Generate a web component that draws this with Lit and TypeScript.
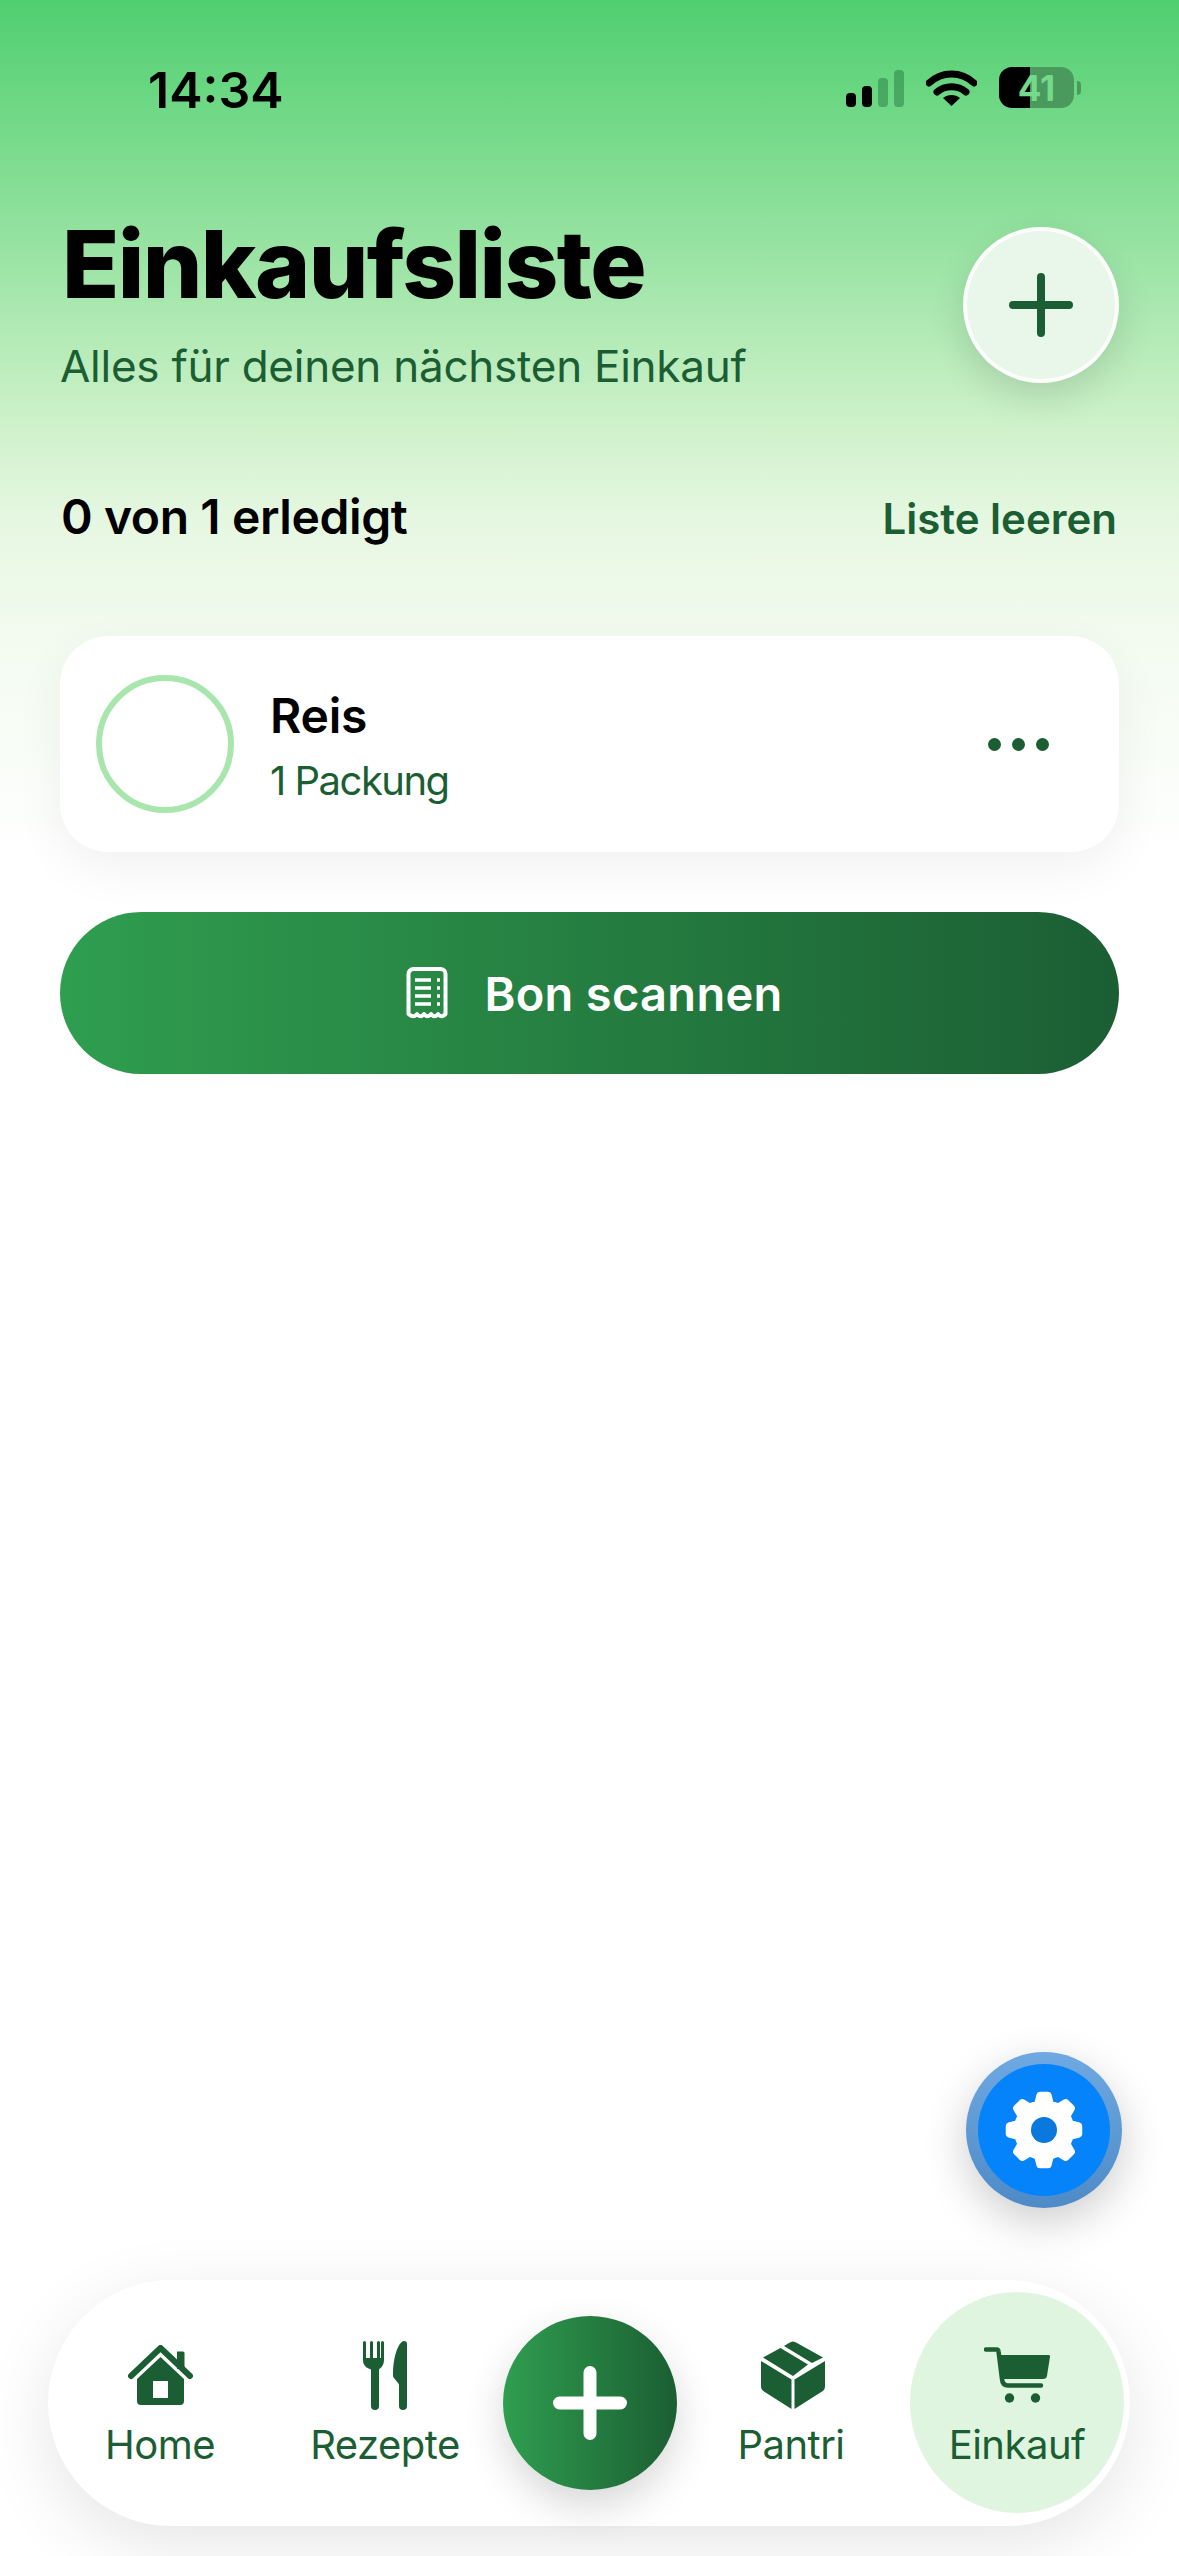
import { LitElement, html, css, svg } from 'lit';
import { customElement } from 'lit/decorators.js';

// 8 teeth gear, outline computed so the teeth stay even
function gearPath(cx: number, cy: number, outer: number, root: number, teeth: number) {
  const step = (Math.PI * 2) / teeth;
  const pts: string[] = [];
  for (let i = 0; i < teeth; i++) {
    const a = -Math.PI / 2 + i * step;
    const at = (r: number, off: number) =>
      `${(cx + Math.cos(a + off) * r).toFixed(2)} ${(cy + Math.sin(a + off) * r).toFixed(2)}`;
    pts.push(at(root, -step * 0.3), at(outer, -step * 0.15), at(outer, step * 0.15), at(root, step * 0.3));
  }
  return 'M' + pts.join('L') + 'Z';
}

const icons = {
  home: svg`<svg width="65" height="60" viewBox="0 0 65 60">
    <path d="M49 6.500h6a1.500 1.500 0 0 1 1.500 1.500v16h-7.500z" fill="currentColor"/>
    <path d="M3 31 32.500 3 62 31" fill="none" stroke="currentColor" stroke-width="6" stroke-linecap="round" stroke-linejoin="round"/>
    <path fill-rule="evenodd" d="M32.500 12 56 34v22a4 4 0 0 1-4 4H13a4 4 0 0 1-4-4V34zM25 36v17h15V36z" fill="currentColor"/>
  </svg>`,
  cutlery: svg`<svg width="44" height="69" viewBox="0 0 44 69">
    <path d="M0 1.500a1.500 1.500 0 0 1 3 0V17h4V1.500a1.500 1.500 0 0 1 3 0V17h4V1.500a1.500 1.500 0 0 1 3 0V17h4V1.500V19c0 5-3 8-5 9.500V65a4 4 0 0 1-8 0V28.500C3 27 0 24 0 19z" fill="currentColor"/>
    <path d="M18 1.500a1.500 1.500 0 0 1 3 0V19h-3z" fill="currentColor"/>
    <path d="M41 0a3 3 0 0 1 3 3v62a4 4 0 0 1-8 0V44a3 3 0 0 0-1-2l-4-5c-1-1-1-2-1-4C30 18 34 5 38.500 1.200 39.300.4 40.100 0 41 0z" fill="currentColor"/>
  </svg>`,
  box: svg`<svg class="box" width="64" height="68" viewBox="0 0 64 68">
    <path d="M0 20 30.500 38.500V68L3 50.500Q0 48.500 0 45z" fill="currentColor"/>
    <path d="M33.500 38.500 64 20V45Q64 48.500 61 50.500L33.500 68z" fill="currentColor"/>
    <path d="M2 16.500 19.500 7 47 23.500 32 35z" fill="currentColor"/>
    <path d="M23 5 28 2Q32 -1 36 2L62 16.500 51 22z" fill="currentColor"/>
  </svg>`,
  cart: svg`<svg width="66" height="56" viewBox="0 0 66 56">
    <path d="M2 2.500h10.500a2 2 0 0 1 2 1.800L18 32q.5 6.500 6 6.500h33" fill="none" stroke="currentColor" stroke-width="4.500" stroke-linecap="round" stroke-linejoin="round"/>
    <path d="M16 8h48.500a1.500 1.500 0 0 1 1.500 1.700l-3 19q-.5 3.300-4 3.300H19.500z" fill="currentColor"/>
    <circle cx="25.500" cy="51" r="4.700" fill="currentColor"/>
    <circle cx="51.500" cy="51" r="4.700" fill="currentColor"/>
  </svg>`,
};

@customElement('app-root')
export class AppRoot extends LitElement {
  static styles = css`
    :host {
      display: flex;
      flex-direction: column;
      position: relative;
      width: 1179px;
      height: 2556px;
      overflow: hidden;
      font-family: Inter, 'Noto Sans', sans-serif;
      color: #000;
      background: linear-gradient(
        180deg,
        #50cf70 0,
        #8ce09a 210px,
        #cdf1c9 420px,
        #e6f7e1 520px,
        #f3fbf0 640px,
        #ffffff 860px
      );
    }
    * { box-sizing: border-box; }

    .status {
      height: 214px;
      flex: none;
      display: flex;
      justify-content: space-between;
      padding: 67px 98px 0 148px;
    }
    .time {
      font-size: 50px;
      font-weight: 600;
      line-height: 46px;
    }
    .sys {
      display: flex;
      align-items: center;
      height: 41px;
      gap: 22px;
    }
    .bars { display: flex; align-items: flex-end; gap: 6px; height: 37px; margin-top: 2px; }
    .bars i { display: block; width: 10px; border-radius: 4px; background: #000; }
    .bars i.dim { background: rgba(0, 70, 30, 0.32); }
    .battery-wrap { display: flex; align-items: center; gap: 3px; }
    .battery {
      width: 75px;
      height: 41px;
      border-radius: 13px;
      display: flex;
      align-items: center;
      justify-content: center;
      font-size: 35px;
      font-weight: 700;
      color: #74d98a;
      background: linear-gradient(90deg, #000 41%, #4a9a5d 41%);
    }
    .nub { width: 4px; height: 14px; border-radius: 0 4px 4px 0; background: #4a9a5d; }

    .head {
      display: flex;
      justify-content: space-between;
      align-items: flex-start;
      padding: 0 60px 0 62px;
    }
    h1 {
      margin: 0;
      font-size: 94px;
      line-height: 100px;
      font-weight: 800;
      letter-spacing: -1.6px;
    }
    .sub {
      margin-top: 24px;
      font-size: 44px;
      line-height: 56px;
      font-weight: 400;
      color: #1b5e33;
      margin-left: -2px;
      letter-spacing: -0.25px;
    }
    .add {
      width: 156px;
      height: 156px;
      margin-top: 13px;
      border-radius: 50%;
      border: 4px solid rgba(255, 255, 255, 0.85);
      background: #e9f6ea;
      display: flex;
      align-items: center;
      justify-content: center;
      box-shadow: 0 14px 36px rgba(0, 0, 0, 0.12);
    }

    .progress {
      display: flex;
      justify-content: space-between;
      align-items: baseline;
      margin-top: 93px;
      padding: 0 62px 0 61px;
    }
    .done { font-size: 48px; line-height: 60px; font-weight: 600; letter-spacing: -0.4px; }
    .clear { font-size: 42px; line-height: 60px; font-weight: 600; color: #1b5e33; letter-spacing: 0; }

    .card {
      margin: 87px 60px 0 60px;
      height: 216px;
      flex: none;
      border-radius: 48px;
      background: #fff;
      display: flex;
      align-items: center;
      padding: 0 70px 0 36px;
      gap: 36px;
      box-shadow: 0 16px 50px rgba(0, 0, 0, 0.06);
    }
    .check {
      width: 138px;
      height: 138px;
      flex: none;
      border-radius: 50%;
      border: 6px solid #a9e6ae;
    }
    .info { flex: 1; padding-top: 5px; }
    .name { font-size: 48px; line-height: 56px; font-weight: 600; letter-spacing: -0.2px; }
    .qty { margin-top: 12px; font-size: 40px; line-height: 50px; color: #1b5e33; letter-spacing: -1.5px; }
    .dots { display: flex; gap: 11px; }
    .dots i { display: block; width: 13px; height: 13px; border-radius: 50%; background: #1b5e33; }

    .scan {
      margin: 60px 60px 0 60px;
      height: 162px;
      flex: none;
      border-radius: 81px;
      background: linear-gradient(90deg, #2f9e4f, #1b5e33);
      color: #fff;
      display: flex;
      align-items: center;
      justify-content: center;
      gap: 36px;
      padding-left: 10px;
      font-size: 47px;
      font-weight: 600;
      letter-spacing: 0.3px;
    }

    .nav {
      margin: auto 49px 30px 48px;
      height: 246px;
      flex: none;
      border-radius: 123px;
      background: #fff;
      display: grid;
      grid-template-columns: 224px 226px 184px 218px 214px;
      align-items: start;
      padding-right: 5px;
      box-shadow: 0 20px 70px rgba(0, 0, 0, 0.1);
    }
    .item {
      display: flex;
      flex-direction: column;
      align-items: center;
      padding-top: 60px;
      color: #1b5e33;
    }
    .ico { height: 70px; display: flex; align-items: center; justify-content: center; }
    .box { margin-left: 3px; }
    .label { margin-top: 10px; font-size: 40px; line-height: 50px; letter-spacing: -0.5px; }
    .item.active {
      width: 214px;
      height: 221px;
      margin: 12px 0 0 10px;
      padding-top: 48px;
      border-radius: 50%;
      background: #dff5e0;
    }
    .plus {
      width: 174px;
      height: 174px;
      margin: 36px 0 0 5px;
      border-radius: 50%;
      background: linear-gradient(90deg, #2f9e4f, #1b5e33);
      display: flex;
      align-items: center;
      justify-content: center;
      box-shadow: 0 16px 40px rgba(0, 0, 0, 0.16);
    }

    .gear {
      position: absolute;
      right: 57px;
      bottom: 348px;
      width: 156px;
      height: 156px;
      border-radius: 50%;
      border: 12px solid transparent;
      background:
        linear-gradient(#0583fa, #0583fa) padding-box,
        linear-gradient(#6ea9e2, #4e8ac6) border-box;
      display: flex;
      align-items: center;
      justify-content: center;
      box-shadow: 0 14px 44px rgba(0, 0, 0, 0.2);
    }
  `;

  render() {
    return html`
      <div class="status">
        <div class="time">14:34</div>
        <div class="sys">
          <div class="bars">
            <i style="height:14px"></i>
            <i style="height:21px"></i>
            <i class="dim" style="height:29px"></i>
            <i class="dim" style="height:37px"></i>
          </div>
          <svg width="51" height="37" viewBox="0 0 51 37">
            <path d="M3 14C16 2 35 2 48 14" fill="none" stroke="#000" stroke-width="7" stroke-linecap="round"/>
            <path d="M11 23C19 16 32 16 40 23" fill="none" stroke="#000" stroke-width="7" stroke-linecap="round"/>
            <path d="M17 29C22 25 29 25 34 29L25.500 37z" fill="#000"/>
          </svg>
          <div class="battery-wrap">
            <div class="battery">41</div>
            <div class="nub"></div>
          </div>
        </div>
      </div>

      <div class="head">
        <div>
          <h1>Einkaufsliste</h1>
          <div class="sub">Alles für deinen nächsten Einkauf</div>
        </div>
        <div class="add">
          <svg width="64" height="64" viewBox="0 0 64 64">
            <path d="M32 4V60M4 32H60" stroke="#1b5e33" stroke-width="8" stroke-linecap="round"/>
          </svg>
        </div>
      </div>

      <div class="progress">
        <div class="done">0 von 1 erledigt</div>
        <div class="clear">Liste leeren</div>
      </div>

      <div class="card">
        <div class="check"></div>
        <div class="info">
          <div class="name">Reis</div>
          <div class="qty">1 Packung</div>
        </div>
        <div class="dots"><i></i><i></i><i></i></div>
      </div>

      <div class="scan">
        <svg width="42" height="52" viewBox="0 0 42 52">
          <path d="M2.500 47V7a5 5 0 0 1 5-5h27a5 5 0 0 1 5 5v40c-3 3-5 3-7.400 0-2.500 3-4.700 3-7.100 0-2.500 3-4.500 3-7 0-2.500 3-4.500 3-7 0-2.500 3-5 3-8.500 0z" fill="none" stroke="#fff" stroke-width="4" stroke-linejoin="round"/>
          <path d="M9 13H25M9 21H25M9 29H25M9 37H25M31 13H34M31 21H34M31 29H34M31 37H34" stroke="#fff" stroke-width="3.500"/>
        </svg>
        <span>Bon scannen</span>
      </div>

      <div class="nav">
        <div class="item"><div class="ico">${icons.home}</div><div class="label">Home</div></div>
        <div class="item"><div class="ico">${icons.cutlery}</div><div class="label">Rezepte</div></div>
        <div class="plus">
          <svg width="74" height="74" viewBox="0 0 74 74">
            <path d="M37 6.500V67.500M6.500 37H67.500" stroke="#fff" stroke-width="13" stroke-linecap="round"/>
          </svg>
        </div>
        <div class="item"><div class="ico">${icons.box}</div><div class="label">Pantri</div></div>
        <div class="item active"><div class="ico">${icons.cart}</div><div class="label">Einkauf</div></div>
      </div>

      <div class="gear">
        <svg width="78" height="78" viewBox="0 0 78 78">
          <path d=${gearPath(39, 39, 35, 27, 8)} fill="#fff" stroke="#fff" stroke-width="7" stroke-linejoin="round"/>
          <circle cx="39" cy="39" r="13" fill="#0a78dc"/>
        </svg>
      </div>
    `;
  }
}
